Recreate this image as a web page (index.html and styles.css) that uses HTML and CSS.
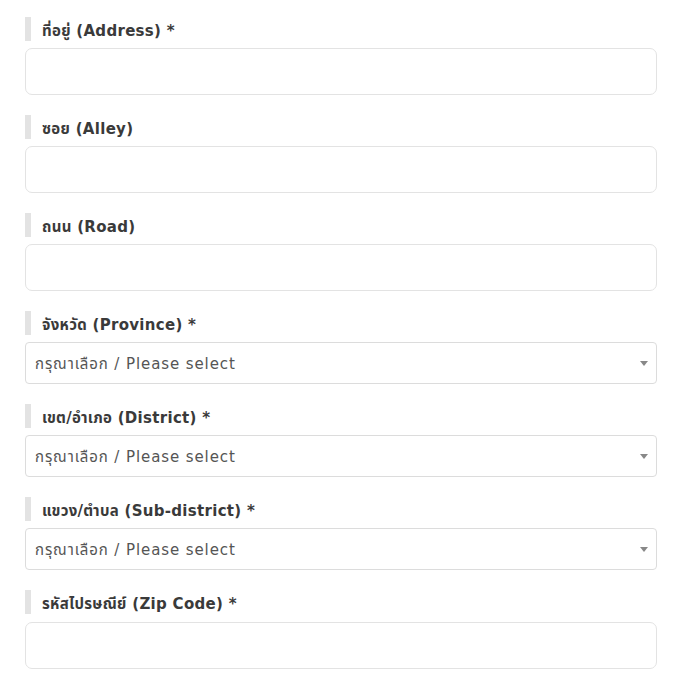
FILE: index.html
```html
<!DOCTYPE html>
<html lang="th">
<head>
    <meta charset="UTF-8">
    <meta name="viewport" content="width=device-width, initial-scale=1.0">
    <title>Address form</title>
    <link rel="stylesheet" href="styles.css">
</head>
<body>
    <form class="address-form">
        <div class="field">
            <label class="field-label" for="address">ที่อยู่ (Address) *</label>
            <input class="field-input" type="text" id="address">
        </div>

        <div class="field">
            <label class="field-label" for="alley">ซอย (Alley)</label>
            <input class="field-input" type="text" id="alley">
        </div>

        <div class="field">
            <label class="field-label" for="road">ถนน (Road)</label>
            <input class="field-input" type="text" id="road">
        </div>

        <!-- selects -->
        <div class="field">
            <label class="field-label">จังหวัด (Province) *</label>
            <div class="select-box">
                <span class="select-text">กรุณาเลือก / Please select</span>
                <span class="select-arrow"></span>
            </div>
        </div>

        <div class="field">
            <label class="field-label">เขต/อำเภอ (District) *</label>
            <div class="select-box">
                <span class="select-text">กรุณาเลือก / Please select</span>
                <span class="select-arrow"></span>
            </div>
        </div>

        <div class="field">
            <label class="field-label">แขวง/ตำบล (Sub-district) *</label>
            <div class="select-box">
                <span class="select-text">กรุณาเลือก / Please select</span>
                <span class="select-arrow"></span>
            </div>
        </div>

        <div class="field">
            <label class="field-label" for="zip">รหัสไปรษณีย์ (Zip Code) *</label>
            <input class="field-input zip-input" type="text" id="zip">
        </div>
    </form>
</body>
</html>
```

FILE: styles.css
```css
* {
    margin: 0;
    padding: 0;
    box-sizing: border-box;
}

body {
    font-family: "DejaVu Sans", "Noto Sans Thai", "Noto Sans", sans-serif;
    background-color: #fff;
    color: #333;
}

.address-form {
    padding: 17px 34px 0 25px;
    display: flex;
    flex-direction: column;
    gap: 20px;
}

.field {
    display: flex;
    flex-direction: column;
    gap: 7px;
}

/* label with grey bar */
.field-label {
    display: block;
    height: 24px;
    line-height: 24px;
    padding-top: 2px;
    border-left: 6px solid #e3e3e3;
    padding-left: 11px;
    font-size: 15px;
    font-weight: bold;
    letter-spacing: 0.3px;
    color: #3a3a3a;
}

.field-input {
    width: 100%;
    height: 47px;
    border: 1px solid #e3e3e3;
    border-radius: 7px;
    outline: none;
    font-size: 15px;
    padding: 0 10px;
}

.zip-input {
    margin-top: 1px;
}

.select-box {
    height: 42px;
    border: 1px solid #dcdcdc;
    border-radius: 4px;
    display: flex;
    align-items: center;
    padding: 0 8px 0 9px;
    font-size: 15px;
    color: #555;
}

.select-text {
    flex: 1;
    padding-top: 2px;
    letter-spacing: 0.9px;
}

.select-arrow {
    width: 0;
    height: 0;
    border-left: 4px solid transparent;
    border-right: 4px solid transparent;
    border-top: 5px solid #888;
}
```
